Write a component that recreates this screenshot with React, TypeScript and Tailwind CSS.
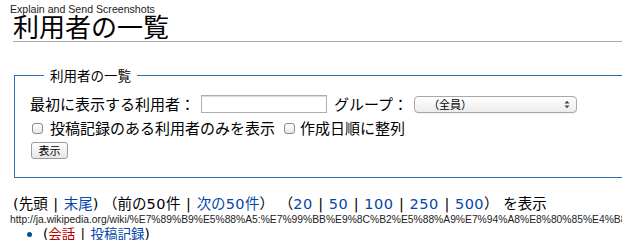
function CheckBox() {
  return <span className="inline-block w-[11px] h-[11px] rounded-[3px] border border-[#8a8a8a] bg-gradient-to-b from-white to-[#e8e8e8] shrink-0"></span>
}

function Sep() {
  return <span className="mx-[1px]"> | </span>
}

function Num({ n }: { n: string }) {
  return <span className="text-[#0645ad] tracking-[0.5px]">{n}</span>
}

export default function App() {
  const jp = { fontFamily: '"Noto Sans CJK JP", "Liberation Sans", sans-serif' }
  const mixed = { fontFamily: '"DejaVu Sans", "Noto Sans CJK JP", sans-serif' }
  const latin = { fontFamily: '"Liberation Sans", sans-serif' }
  return (
    <div className="relative w-[622px] h-[240px] overflow-hidden bg-white text-black" style={jp}>
      <div className="absolute left-[10px] top-[4px] text-[10.6px] leading-[11px] text-[#222]" style={latin}>Explain and Send Screenshots</div>

      <div className="pl-[13px] pt-[11px]">
        <h1 className="text-[26px] leading-[29px] border-b border-[#aaa] pb-[1px]">利用者の一覧</h1>

        <fieldset className="mt-[26px] ml-[1px] mr-[-20px] border border-[#2f6fab] px-[15px] pt-[12px] pb-[18px]">
          <legend className="ml-[14px] px-[6px] text-[13.5px] leading-[14px]">利用者の一覧</legend>

          <div className="flex items-center h-[20px] text-[15px] leading-[20px]">
            <span>最初に表示する利用者：</span>
            <span className="ml-[6px] inline-block w-[126px] h-[18px] border border-[#b0b0b0] shadow-[inset_0_1px_1px_rgba(0,0,0,0.15)] bg-white"></span>
            <span className="ml-[7px]">グループ：</span>
            <span className="ml-[6px] flex items-center w-[163px] h-[17px] rounded-[4px] border border-[#a8a8a8] bg-gradient-to-b from-white to-[#ececec] shadow-[0_1px_0_rgba(0,0,0,0.05)]">
              <span className="ml-[13px] text-[11px] leading-[15px]">（全員）</span>
              <svg className="ml-auto mr-[6px]" width="6" height="9" viewBox="0 0 6 9">
                <path d="M0.5 3.5 L3 0.8 L5.5 3.5 Z M0.5 5.5 L3 8.2 L5.5 5.5 Z" fill="#444" />
              </svg>
            </span>
          </div>

          <div className="flex items-center h-[18px] mt-[5px] text-[15px] leading-[18px]">
            <span className="ml-[2px]"><CheckBox /></span>
            <span className="ml-[7px]">投稿記録のある利用者のみを表示</span>
            <span className="ml-[9px]"><CheckBox /></span>
            <span className="ml-[5px]">作成日順に整列</span>
          </div>

          <div className="mt-[5px] ml-[1px] flex items-center justify-center w-[37px] h-[17px] rounded-[3px] border border-[#9a9a9a] bg-gradient-to-b from-white to-[#e6e6e6] text-[11px] leading-[15px]">
            表示
          </div>
        </fieldset>

        <div className="mt-[16px] text-[14.5px] leading-[20px] whitespace-nowrap" style={mixed}>
          (先頭<Sep /><span className="text-[#0645ad]">末尾</span>) （前の<span className="tracking-[0.5px]">50</span>件<Sep /><span className="text-[#0645ad]">次の<span className="tracking-[0.5px]">50</span>件</span>） （<Num n="20" /><Sep /><Num n="50" /><Sep /><Num n="100" /><Sep /><Num n="250" /><Sep /><Num n="500" />） を表示
        </div>

        <ul className="mt-[10px] pl-[14px]">
          <li className="flex items-center text-[13.5px] leading-[20px]" style={mixed}>
            <span className="w-[5px] h-[5px] rounded-full bg-[#00528c] mr-[11px]"></span>
            <span>(<span className="text-[#ba0000]">会話</span><Sep /><span className="text-[#0645ad]">投稿記録</span>)</span>
          </li>
        </ul>
      </div>

      <div className="absolute left-[10px] top-[214px] w-[612px] overflow-hidden whitespace-nowrap text-[10.3px] leading-[11px] text-[#222]" style={latin}>
        http://ja.wikipedia.org/wiki/%E7%89%B9%E5%88%A5:%E7%99%BB%E9%8C%B2%E5%88%A9%E7%94%A8%E8%80%85%E4%B8%80%E8%A6%A7
      </div>
    </div>
  )
}
